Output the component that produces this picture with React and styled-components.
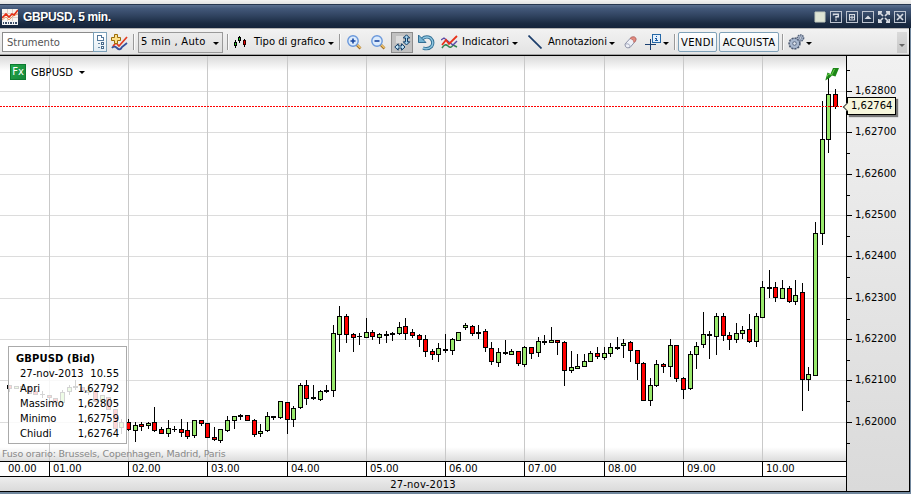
import React from 'react'
import styled, { createGlobalStyle } from 'styled-components'

const GlobalStyle = createGlobalStyle`
  * { box-sizing: border-box; }
  body {
    margin: 0;
    overflow: hidden;
    background: #ececec;
    font-family: 'DejaVu Sans', Verdana, sans-serif;
    font-size: 10px;
    color: #000;
  }
  svg { display: block; flex: none; }
`

const Window = styled.div`
  width: 911px;
  height: 494px;
  display: flex;
  flex-direction: column;
  padding-top: 4px;
  background: linear-gradient(#f2f2f2, #e2e2e2 4px, #71879d 5px);
`

const TitleBar = styled.div`
  height: 24px;
  flex: none;
  display: flex;
  align-items: center;
  padding: 0 5px 0 2px;
  border-top: 1px solid #26364f;
  background: linear-gradient(#5b7090, #43587a 15%, #2e415d 50%, #1a2a41 80%, #14233a);
`

const Title = styled.h1`
  flex: 1;
  margin: 0 0 0 5px;
  font: bold 12px 'Liberation Sans', Arial, sans-serif;
  letter-spacing: -0.35px;
  color: #fff;
  text-shadow: 1px 1px 0 #0d1828;
`

const WindowButtons = styled.div`
  display: flex;
  gap: 4px;
`

const Body = styled.div`
  height: 464px;
  margin-right: 1px;
  border-right: 1px solid #000;
  border-bottom: 1px solid #000;
`

const Toolbar = styled.div`
  height: 28px;
  display: flex;
  align-items: center;
  padding-left: 2px;
  padding-right: 2px;
  border-top: 1px solid #b4b4b4;
  border-bottom: 1px solid #000;
  box-shadow: inset 0 -1px 0 #a4a4a4;
  background: linear-gradient(#f2f2f2, #e3e3e3);
`

const Item = styled.div`
  flex: none;
  width: ${p => p.$w}px;
  margin-left: ${p => p.$ml || 0}px;
`

const ToolText = styled.span`
  flex: none;
  width: ${p => p.$w}px;
  margin-left: ${p => p.$ml}px;
  white-space: nowrap;
  letter-spacing: ${p => p.$ls || 0}px;
  line-height: 14px;
`

const Search = styled.div`
  flex: none;
  display: flex;
  width: 105px;
  height: 20px;
`

const SearchField = styled.div`
  width: 91px;
  padding-left: 4px;
  border: 1px solid #8b8b8b;
  border-right: 0;
  background: #fff;
  color: #555;
  line-height: 20px;
`

const SearchButton = styled.div`
  width: 14px;
  padding: 2px 0 0 2px;
  border: 1px solid #7ba0b8;
  background: linear-gradient(#fff, #e2edf4);
`

const Separator = styled.i`
  flex: none;
  width: 2px;
  height: 16px;
  margin-left: ${p => p.$ml}px;
  border-left: 1px solid #999;
  border-right: 1px solid #fafafa;
`

const Select = styled.div`
  flex: none;
  display: flex;
  align-items: center;
  width: 85px;
  height: 21px;
  margin-left: 3px;
  padding-left: 2px;
  border: 1px solid #999;
  background: linear-gradient(#ebebeb, #dedede);
`

const Caret = styled.i`
  flex: none;
  width: 0;
  margin-left: ${p => p.$ml || 0}px;
  margin-top: ${p => p.$mt || 0}px;
  border: 3px solid transparent;
  border-top-color: ${p => p.$color || '#000'};
  border-bottom: 0;
`

const Toggle = styled.div`
  flex: none;
  width: 22px;
  height: 21px;
  margin-left: 5px;
  padding: 1px 0 0 2px;
  border: 1px solid #8c8c8c;
  background: #c1c1c1;
`

const OrderButton = styled.div`
  flex: none;
  width: ${p => p.$w}px;
  height: 20px;
  margin-left: ${p => p.$ml}px;
  border: 1px solid #7fa1b8;
  border-radius: 2px;
  background: linear-gradient(#fff, #e9eef2);
  line-height: 19px;
  letter-spacing: 0.3px;
  text-align: center;
`

const Overflow = styled.div`
  width: 10px;
  height: 21px;
  margin-left: auto;
  padding: 15px 0 0 2px;
  background: linear-gradient(#dadada, #c8c8c8);
`

const Main = styled.div`
  display: flex;
  height: 435px;
`

const PlotColumn = styled.div`
  width: 847px;
  border-right: 1px solid #000;
`

const Plot = styled.div`
  position: relative;
  height: 405px;
  background: linear-gradient(#d9d9d9, #fff 15px, #fff 391px, #dcdcdc);
`

const Symbol = styled.div`
  position: absolute;
  left: 10px;
  top: 8px;
  display: flex;
  align-items: center;
`

const FxBadge = styled.span`
  width: 16px;
  height: 16px;
  margin-right: 5px;
  border: 1px solid #0c7b30;
  background: linear-gradient(135deg, #23a84c, #16873a);
  color: #fff;
  font-size: 10px;
  line-height: 14px;
  text-align: center;
`

const InfoBox = styled.div`
  position: absolute;
  left: 8px;
  top: 290px;
  width: 119px;
  height: 98px;
  padding: 4px 7px 0 11px;
  border: 1px solid #aaa;
  background: rgba(255, 255, 255, 0.83);
`

const InfoTitle = styled.div`
  margin-left: -4px;
  font-weight: bold;
  line-height: 15px;
  letter-spacing: 0.1px;
  white-space: nowrap;
`

const InfoRow = styled.div`
  display: flex;
  justify-content: space-between;
  line-height: 15px;
  white-space: nowrap;
`

const TimeZone = styled.div`
  position: absolute;
  left: 2px;
  top: 391px;
  font-size: 9.5px;
  line-height: 13px;
  letter-spacing: -0.18px;
  color: #888;
  white-space: nowrap;
`

const TimeAxis = styled.div`
  display: flex;
  height: 16px;
  border-top: 1px solid #000;
  border-bottom: 1px solid #000;
  background: #fff;
`

const Hour = styled.div`
  flex: none;
  width: ${p => p.$w}px;
  padding-left: ${p => p.$first ? 8 : 3}px;
  border-left: ${p => p.$first ? 0 : '1px solid #000'};
  line-height: 14px;
`

const DateBar = styled.div`
  height: 14px;
  background: linear-gradient(#ededed, #dadada);
  line-height: 15px;
  text-align: center;
  letter-spacing: 0.2px;
`

const PriceAxis = styled.div`
  position: relative;
  width: 62px;
  padding-top: 14px;
  background: linear-gradient(#f1f1f1, #dadada);
`

const HalfTick = styled.div`
  width: 3px;
  height: 1px;
  margin-bottom: 13px;
  background: #000;
`

const PriceRow = styled.div`
  display: flex;
  align-items: flex-start;
  height: 41.35px;
  line-height: 14px;
`

const Price = styled.span`
  margin-left: 3px;
`

const Tick = styled.div`
  width: 5px;
  height: 41px;
  padding-top: 7px;
  &::before, &::after {
    content: '';
    display: block;
    height: 1px;
    background: #000;
  }
  &::before { width: 5px; }
  &::after { width: 3px; margin-top: 20px; }
`

const LastPrice = styled.div`
  position: absolute;
  left: 0;
  top: 41px;
  width: 49px;
  height: 18px;
  padding-left: 3px;
  border: 1px solid #000;
  background: #f6f6dc;
  box-shadow: 2px 2px 1px #777;
  line-height: 16px;
  &::before {
    content: '';
    position: absolute;
    left: -4px;
    top: 6px;
    width: 5px;
    height: 5px;
    border: 1px solid #444;
    border-width: 0 0 1px 1px;
    background: #f6f6dc;
    transform: rotate(45deg);
  }
`

// [high, body top, body bottom, low, kind] in chart pixels, g = up, r = down, d = flat
const FIRST = -7
const candles = [
  [385, 385, 388, 388, 'r'], [385, 385, 388, 391, 'r'], [386, 386, 388, 388, 'g'], [386, 386, 388, 388, 'g'],
  [387, 387, 393, 393, 'r'], [389, 391, 394, 394, 'r'], [391, 394, 394, 397, 'd'],
  [395, 395, 397, 400, 'r'], [398, 398, 402, 404, 'r'], [390, 392, 402, 402, 'g'], [385, 387, 391, 394, 'g'],
  [380, 386, 387, 389, 'd'], [387, 387, 390, 390, 'r'], [388, 390, 392, 394, 'g'], [391, 391, 401, 401, 'r'],
  [395, 395, 401, 401, 'g'], [397, 397, 409, 409, 'r'], [409, 409, 428, 428, 'r'], [419, 422, 427, 433, 'g'],
  [419, 422, 429, 430, 'r'], [422, 425, 430, 441, 'g'], [422, 424, 426, 430, 'r'], [422, 423, 425, 428, 'g'],
  [407, 422, 430, 431, 'r'], [427, 429, 433, 433, 'r'], [420, 428, 433, 436, 'g'], [426, 429, 429, 431, 'd'],
  [419, 429, 432, 436, 'r'], [422, 430, 436, 438, 'r'], [420, 420, 435, 437, 'g'], [420, 420, 423, 425, 'r'],
  [423, 423, 437, 437, 'r'], [427, 437, 439, 440, 'r'], [429, 429, 440, 442, 'g'], [416, 420, 430, 431, 'g'],
  [416, 416, 420, 428, 'g'], [414, 415, 416, 419, 'd'], [415, 415, 420, 420, 'r'], [419, 420, 434, 436, 'r'],
  [424, 431, 433, 436, 'g'], [412, 416, 430, 431, 'g'], [416, 416, 417, 419, 'd'], [401, 401, 417, 418, 'g'],
  [402, 402, 419, 433, 'r'], [406, 408, 419, 426, 'g'], [383, 385, 407, 408, 'g'], [380, 385, 398, 404, 'r'],
  [385, 397, 398, 399, 'd'], [390, 391, 399, 400, 'g'], [385, 390, 391, 392, 'd'], [325, 333, 390, 396, 'g'],
  [306, 316, 334, 351, 'g'], [314, 316, 334, 342, 'r'], [333, 334, 337, 351, 'r'], [333, 336, 336, 344, 'd'],
  [318, 332, 337, 337, 'g'], [330, 332, 336, 339, 'r'], [333, 334, 337, 343, 'g'], [331, 334, 335, 342, 'd'],
  [332, 333, 334, 340, 'd'], [322, 327, 333, 334, 'g'], [318, 326, 333, 339, 'r'], [329, 332, 335, 337, 'r'],
  [334, 335, 339, 346, 'r'], [335, 339, 351, 356, 'r'], [349, 351, 354, 359, 'r'], [343, 348, 354, 361, 'g'],
  [334, 349, 350, 352, 'd'], [338, 339, 350, 354, 'g'], [332, 332, 340, 340, 'g'], [323, 325, 327, 329, 'g'],
  [325, 326, 333, 335, 'r'], [325, 332, 333, 338, 'd'], [329, 331, 347, 351, 'r'], [342, 348, 361, 364, 'r'],
  [348, 352, 362, 366, 'g'], [340, 352, 353, 354, 'd'], [349, 351, 354, 354, 'g'], [351, 351, 363, 365, 'r'],
  [346, 347, 364, 366, 'g'], [347, 347, 353, 358, 'r'], [337, 341, 352, 356, 'g'], [335, 341, 342, 344, 'd'],
  [327, 340, 342, 342, 'g'], [340, 340, 342, 354, 'r'], [341, 342, 370, 385, 'r'], [351, 367, 370, 372, 'g'],
  [354, 366, 368, 368, 'g'], [354, 361, 366, 366, 'g'], [351, 353, 361, 361, 'g'], [347, 353, 356, 358, 'r'],
  [347, 353, 357, 359, 'g'], [343, 347, 353, 356, 'g'], [337, 347, 348, 349, 'd'], [339, 343, 345, 357, 'g'],
  [341, 342, 350, 361, 'r'], [350, 350, 363, 379, 'r'], [362, 363, 400, 400, 'r'], [378, 385, 400, 405, 'g'],
  [360, 364, 385, 386, 'g'], [363, 364, 366, 372, 'r'], [339, 345, 366, 376, 'g'], [345, 345, 378, 381, 'r'],
  [377, 378, 389, 398, 'r'], [351, 354, 388, 389, 'g'], [342, 346, 354, 368, 'g'], [312, 334, 344, 347, 'g'],
  [331, 334, 335, 358, 'd'], [313, 316, 336, 354, 'g'], [313, 316, 335, 340, 'r'], [332, 335, 339, 349, 'r'],
  [323, 333, 339, 342, 'g'], [326, 330, 333, 338, 'g'], [314, 329, 341, 342, 'r'], [313, 316, 341, 346, 'g'],
  [281, 287, 317, 317, 'g'], [270, 287, 288, 297, 'd'], [282, 287, 297, 301, 'r'], [280, 288, 298, 298, 'g'],
  [286, 288, 301, 302, 'r'], [280, 295, 301, 304, 'g'], [283, 292, 379, 410, 'r'], [367, 374, 379, 390, 'g'],
  [222, 233, 375, 375, 'g'], [101, 139, 233, 244, 'g'], [77, 94, 139, 152, 'g'], [89, 94, 106, 108, 'r'],
]

const hourLines = [49, 128, 207, 287, 366, 445, 524, 604, 683, 762]
const priceLines = [91, 132, 174, 215, 256, 298, 339, 380, 422]
const prices = ['1,62800', '1,62700', '1,62600', '1,62500', '1,62400', '1,62300', '1,62200', '1,62100', '1,62000']
const fills = { g: '#99e96c', r: '#ff0000', d: '#000' }

function Candle({ index, data }) {
  const [high, top, bottom, low, kind] = data
  const x = Math.round(48.7 + 6.6065 * (index + FIRST))
  return (
    <g>
      <rect x={x} y={high} width="1" height={low - high + 1} />
      <rect x={x - 2} y={top} width="5" height={bottom - top + 1} />
      {kind !== 'd' && <rect x={x - 1} y={top + 1} width="3" height={bottom - top - 1} fill={fills[kind]} />}
    </g>
  )
}

function Chart() {
  return (
    <svg width="846" height="405" viewBox="0 56 846 405" shapeRendering="crispEdges">
      <clipPath id="series"><rect x="5" y="56" width="841" height="405" /></clipPath>
      {priceLines.map(y => <rect key={y} x="0" y={y} width="846" height="1" fill="#dcdcdc" />)}
      {hourLines.map(x => <rect key={x} x={x} y="56" width="1" height="405" fill="#c9c9c9" />)}
      <g clipPath="url(#series)">
        {candles.map((c, i) => <Candle key={i} index={i} data={c} />)}
      </g>
      <path d="M0 106.5H843" stroke="#ff0000" strokeDasharray="2 1" />
      <g shapeRendering="auto">
        <path d="M825.3 80.500L827.500 72.500L830.500 74L833 68H839L835.500 76.500L832 75.500L829.500 78Z" fill="#1d8618" />
        <path d="M827 76.500L828.500 74L831.500 75L834.500 69" fill="none" stroke="#6ad24c" />
      </g>
    </svg>
  )
}

function LogoIcon() {
  return (
    <svg width="16" height="16" viewBox="0 0 16 16">
      <rect width="16" height="12" fill="#f8f4ef" />
      <path d="M0 4.5H16M0 8.5H16M5.5 0V12M10.5 0V12" stroke="#ddd0c8" />
      <path d="M0 11L4 8L7 11L11 7L16 5" fill="none" stroke="#ee9b62" />
      <path d="M0 9L4 5L7 8L10 5L12 6L16 1" fill="none" stroke="#e42d12" strokeWidth="1.700" />
      <rect y="12" width="16" height="4" fill="#f4f4f4" />
      <path d="M1 14H16" stroke="#3a4d68" strokeWidth="2" strokeDasharray="1 1 2 1" />
    </svg>
  )
}

function ListIcon() {
  return (
    <svg width="9" height="15" viewBox="0 0 9 15" shapeRendering="crispEdges">
      <path d="M1.5 5.5V.5H5.5V2.5H7.5V5.5Z" fill="#fff" stroke="#53789b" />
      <path d="M2 8.5H4M2 12.5H4" stroke="#6688a5" strokeWidth="1" />
      <path d="M5.5 7.5H7.5V9.5H5.5ZM5.5 11.5H7.5V13.5H5.5Z" fill="#fff" stroke="#47698a" />
    </svg>
  )
}

function AddChartIcon() {
  return (
    <svg width="17" height="17" viewBox="0 0 17 17">
      <path d="M1 14Q3 11 6 14T11 13L16 9" fill="none" stroke="#354f9c" strokeWidth="1.8" />
      <path d="M2 12L5 9L8 12L16 3" fill="none" stroke="#e33b22" strokeWidth="1.7" />
      <path d="M3.5.5H6.5V3.5H9.5V6.5H6.5V9.5H3.5V6.5H.5V3.5H3.5Z" fill="#fce08a" stroke="#9c6c08" />
    </svg>
  )
}

function CandlesIcon() {
  return (
    <svg width="12" height="14" viewBox="0 0 12 14" shapeRendering="crispEdges">
      <path d="M1.5 5V13M5.5 1V8M10.5 4V12" stroke="#000" />
      <path d="M.5 7.5H2.5V10.5H.5ZM4.5 2.5H6.5V5.5H4.5Z" fill="#0b0" stroke="#000" />
      <path d="M1 8H2V10H1ZM5 3H6V5H5Z" fill="#2c2" />
      <path d="M9.5 5.5H11.5V9.5H9.5Z" fill="#e00" stroke="#300" />
    </svg>
  )
}

function MagnifierIcon({ plus }) {
  return (
    <svg width="15" height="15" viewBox="0 0 15 15">
      <path d="M9 9L13.5 13.5" stroke="#a06d25" strokeWidth="2.6" />
      <path d="M10 9.5L13.5 13" stroke="#f3c973" strokeWidth="1.2" />
      <circle cx="6" cy="6" r="5.200" fill="#dcebfc" stroke="#6a98db" strokeWidth="1.400" />
      <path d={plus ? 'M3.500 6H8.500M6 3.500V8.500' : 'M3.500 6H8.500'} stroke="#17459f" strokeWidth="1.600" />
    </svg>
  )
}

function AutoScaleIcon() {
  return (
    <svg width="17" height="17" viewBox="0 0 17 17">
      <path d="M2 2H9V9H2Z" fill="#dcdcdc" />
      <path d="M12.5.8L15.700 4H13.500V7.800H15.700L12.5 11L9.300 7.800H11.500V4H9.300Z" fill="#a6d4ef" stroke="#123d66" />
      <path d="M.8 13L4.2 9.800V12H7.600V9.800L11 13L7.600 16.200V14H4.2V16.200Z" fill="#c4e6f8" stroke="#123d66" />
    </svg>
  )
}

function UndoIcon() {
  return (
    <svg width="17" height="17" viewBox="0 0 17 17">
      <path d="M4 5Q8 1.5 12.5 4Q16.5 8 13.5 12.5Q10 16 5 14" fill="none" stroke="#326f94" strokeWidth="3.2" />
      <path d="M4 5Q8 1.5 12.5 4Q16.5 8 13.5 12.5Q10 16 5 14" fill="none" stroke="#8dc5e0" strokeWidth="1.4" />
      <path d="M.5 1V8.5H8Z" fill="#73b2d2" stroke="#326f94" />
    </svg>
  )
}

function IndicatorsIcon() {
  return (
    <svg width="17" height="15" viewBox="0 0 17 15">
      <path d="M1 13Q4 8 7 11T12 10L16 12" fill="none" stroke="#348450" strokeWidth="1.5" />
      <path d="M0 5L3 3L8 7L12 10L16 6" fill="none" stroke="#5a48a5" strokeWidth="1.4" />
      <path d="M1 10L5 5L8 9L16 1" fill="none" stroke="#e8321a" strokeWidth="1.8" />
    </svg>
  )
}

function EraserIcon() {
  return (
    <svg width="13" height="13" viewBox="0 0 13 13">
      <path d="M1 8L7 1.5Q11 0 12 3L11.5 5L6 11.5Q1 13 1 8Z" fill="#eef0f7" stroke="#8e93a8" />
      <path d="M6 2.5L7.5 1.2Q11.5 0 12 3L11.5 5L10 6.5Q10 3 6 2.5Z" fill="#e28b80" stroke="#bd5c50" strokeWidth=".7" />
      <path d="M1.5 8Q6 7 6 11" fill="none" stroke="#a2a8bc" />
    </svg>
  )
}

function CrosshairIcon() {
  return (
    <svg width="16" height="16" viewBox="0 0 16 16" shapeRendering="crispEdges">
      <path d="M0 10.5H11M5.5 5V16" stroke="#193f70" />
      <rect x="7.5" y=".5" width="8" height="8" fill="#e3f0fc" stroke="#2467a7" />
      <path d="M11 2H12V3H11ZM10 4H12V6H13V7H10V6H11V5H10Z" fill="#1b5ca5" />
    </svg>
  )
}

function GearsIcon() {
  return (
    <svg width="17" height="16" viewBox="0 0 17 16">
      <circle cx="6.500" cy="9.500" r="5.200" fill="#8c9db8" stroke="#4f5c73" strokeWidth="2" strokeDasharray="2 1" />
      <circle cx="6.500" cy="9.500" r="4.600" fill="#a9b8cf" />
      <circle cx="6.500" cy="9.500" r="1.800" fill="#dfe5ee" stroke="#5d6b84" />
      <circle cx="12.500" cy="4" r="3.100" fill="#a9b6cb" stroke="#56637b" strokeWidth="1.500" strokeDasharray="1.500 .8" />
      <circle cx="12.500" cy="4" r="1.100" fill="#e6ebf2" stroke="#5d6b84" strokeWidth=".6" />
    </svg>
  )
}

const windowIcons = [
  { name: 'restore', frame: false, shape: <path d="M1 1H11V11H1Z" fill="#dfe5d5" stroke="#c3cbc0" strokeWidth="1" /> },
  { name: 'help', frame: true, shape: <path d="M3.500 4.500V3.200H8.300V5.700H6V7.500M6 8.300V9.800" /> },
  { name: 'new', frame: true, shape: <path d="M3.500 3.500H8.500V9H3.500ZM6 4.500V8M4 6.300H8" strokeWidth="1.100" /> },
  { name: 'up', frame: true, shape: <path d="M2.500 8H9.500L6 4.500Z" fill="#d6dae1" stroke="none" /> },
  { name: 'expand', frame: false, shape: <path d="M1.500 1.500L5 5M10.500 1.500L7 5M1.500 10.500L5 7M10.500 10.500L7 7M.8 4V.8H4M8 .8H11.200V4M.8 8V11.200H4M8 11.200H11.200V8" strokeWidth="1.700" /> },
  { name: 'close', frame: true, shape: <path d="M3 3L9 9M9 3L3 9" strokeWidth="1.700" /> },
]

function WindowIcon({ frame, children }) {
  return (
    <svg width="12" height="12" viewBox="0 0 12 12" fill="none" stroke="#d6dae1" strokeWidth="1.400">
      {frame && <rect x=".5" y=".5" width="11" height="11" stroke="#bcc3cf" strokeWidth="1" />}
      {children}
    </svg>
  )
}

function App() {
  return (
    <Window>
      <GlobalStyle />
      <TitleBar>
        <LogoIcon />
        <Title>GBPUSD, 5 min.</Title>
        <WindowButtons>
          {windowIcons.map(b => <WindowIcon key={b.name} frame={b.frame}>{b.shape}</WindowIcon>)}
        </WindowButtons>
      </TitleBar>
      <Body>
        <Toolbar>
          <Search>
            <SearchField>Strumento</SearchField>
            <SearchButton><ListIcon /></SearchButton>
          </Search>
          <Item $w={17} $ml={4}><AddChartIcon /></Item>
          <Separator $ml={5} />
          <Select>
            <ToolText $w={66} $ml={0} $ls={0.3}>5 min , Auto</ToolText>
            <Caret $ml={6} $mt={2} />
          </Select>
          <Separator $ml={4} />
          <Item $w={12} $ml={5}><CandlesIcon /></Item>
          <ToolText $w={74} $ml={8}>Tipo di grafico</ToolText>
          <Caret $ml={0} $mt={3} />
          <Separator $ml={5} />
          <Item $w={15} $ml={6}><MagnifierIcon plus /></Item>
          <Item $w={15} $ml={9}><MagnifierIcon /></Item>
          <Toggle><AutoScaleIcon /></Toggle>
          <Item $w={17} $ml={5}><UndoIcon /></Item>
          <Item $w={17} $ml={6}><IndicatorsIcon /></Item>
          <ToolText $w={50} $ml={4}>Indicatori</ToolText>
          <Caret $ml={0} $mt={3} />
          <Item $w={14} $ml={10}>
            <svg width="14" height="14" viewBox="0 0 14 14">
              <path d="M.5 .5L13.500 13.500" stroke="#1c3e6c" strokeWidth="1.700" />
            </svg>
          </Item>
          <ToolText $w={61} $ml={6}>Annotazioni</ToolText>
          <Caret $ml={0} $mt={3} />
          <Item $w={13} $ml={9}><EraserIcon /></Item>
          <Item $w={16} $ml={8}><CrosshairIcon /></Item>
          <Caret $ml={2} $mt={3} />
          <Separator $ml={5} />
          <OrderButton $w={39} $ml={2}>VENDI</OrderButton>
          <OrderButton $w={60} $ml={2}>ACQUISTA</OrderButton>
          <Separator $ml={3} />
          <Item $w={17} $ml={4}><GearsIcon /></Item>
          <Caret $ml={1} $mt={3} />
          <Overflow><Caret $color="#666" /></Overflow>
        </Toolbar>
        <Main>
          <PlotColumn>
            <Plot>
              <Chart />
              <Symbol>
                <FxBadge>Fx</FxBadge>
                GBPUSD
                <Caret $ml={6} />
              </Symbol>
              <InfoBox>
                <InfoTitle>GBPUSD (Bid)</InfoTitle>
                <InfoRow><span>27-nov-2013</span><span>10.55</span></InfoRow>
                <InfoRow><span>Apri</span><span>1,62792</span></InfoRow>
                <InfoRow><span>Massimo</span><span>1,62805</span></InfoRow>
                <InfoRow><span>Minimo</span><span>1,62759</span></InfoRow>
                <InfoRow><span>Chiudi</span><span>1,62764</span></InfoRow>
              </InfoBox>
              <TimeZone>Fuso orario: Brussels, Copenhagen, Madrid, Paris</TimeZone>
            </Plot>
            <TimeAxis>
              <Hour $first $w={49}>00.00</Hour>
              {hourLines.map((x, i) => (
                <Hour key={x} $w={(hourLines[i + 1] || 846) - x}>{String(i + 1).padStart(2, '0')}.00</Hour>
              ))}
            </TimeAxis>
            <DateBar>27-nov-2013</DateBar>
          </PlotColumn>
          <PriceAxis>
            <HalfTick />
            {prices.map(p => (
              <PriceRow key={p}><Tick /><Price>{p}</Price></PriceRow>
            ))}
            <LastPrice>1,62764</LastPrice>
          </PriceAxis>
        </Main>
      </Body>
    </Window>
  )
}

export default App
